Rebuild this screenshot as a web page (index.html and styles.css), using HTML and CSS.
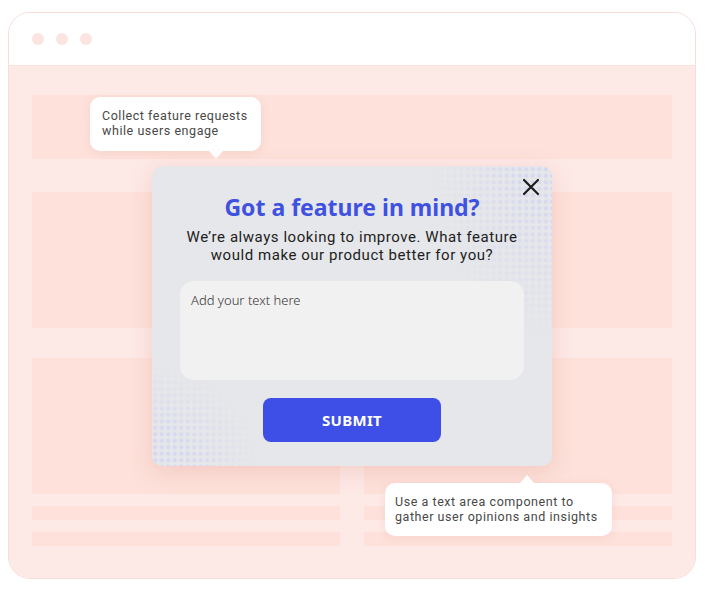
FILE: index.html
```html
<!DOCTYPE html>
<html>
<head>
	<title>feature request</title>
	<link rel="stylesheet" href="styles.css">
</head>
<body>
<div class="browser">
	<div class="browser_bar">
		<span class="dot"></span>
		<span class="dot"></span>
		<span class="dot"></span>
	</div>
	<div class="browser_body">
		<div class="block block_top"></div>
		<div class="block block_mid"></div>
		<div class="cols">
			<div class="col">
				<div class="block block_big"></div>
				<div class="block line"></div>
				<div class="block line"></div>
			</div>
			<div class="col">
				<div class="block block_big"></div>
				<div class="block line"></div>
				<div class="block line"></div>
			</div>
		</div>

		<div class="tip tip_top">
			<p>Collect feature requests<br>while users engage</p>
		</div>

		<div class="modal">
			<div class="dots dots_tr"></div>
			<div class="dots dots_bl"></div>
			<button class="close" aria-label="close">
				<svg width="18" height="18" viewBox="0 0 18 18">
					<path d="M2 2 L16 16 M16 2 L2 16" stroke="#1c1c1c" stroke-width="2.2" stroke-linecap="round"/>
				</svg>
			</button>
			<h1 class="modal_title">Got a feature in mind?</h1>
			<p class="modal_text">We’re always looking to improve. What feature<br>would make our product better for you?</p>
			<textarea class="modal_input" placeholder="Add your text here"></textarea>
			<button class="submit">SUBMIT</button>
		</div>

		<div class="tip tip_bottom">
			<p>Use a text area component to<br>gather user opinions and insights</p>
		</div>
	</div>
</div>
</body>
</html>
```

FILE: styles.css
```css
body{
	margin: 0;
	background: #fff;
	font-family: "Noto Sans", sans-serif;
}
.browser{
	margin: 12px 0 0 8px;
	width: 688px;
	height: 567px;
	box-sizing: border-box;
	border: 1px solid #f8dcd6;
	border-radius: 22px;
	overflow: hidden;
	display: flex;
	flex-direction: column;
}
.browser_bar{
	height: 53px;
	flex: none;
	background: #fff;
	display: flex;
	align-items: center;
	gap: 12px;
	padding: 0 0 1px 23px;
	border-bottom: 1px solid #fbe4df;
	box-sizing: border-box;
}
.dot{
	width: 12px;
	height: 12px;
	border-radius: 50%;
	background: #fce5e1;
}
.browser_body{
	position: relative;
	flex: 1;
	background: #fde9e6;
	padding: 29px 23px 0;
}
.block{
	background: #fde1da;
}
.block_top{
	height: 64px;
}
.block_mid{
	height: 136px;
	margin-top: 33px;
}
.cols{
	display: grid;
	grid-template-columns: 308px 308px;
	gap: 24px;
	margin-top: 30px;
}
.block_big{
	height: 136px;
}
.line{
	height: 14px;
	margin-top: 12px;
}

/* callouts */
.tip{
	position: absolute;
	background: #fff;
	border-radius: 10px;
	box-shadow: 0 2px 8px rgba(220, 150, 140, 0.18);
	box-sizing: border-box;
	font-family: Roboto, sans-serif;
	font-size: 12.5px;
	letter-spacing: 0.55px;
	line-height: 14.5px;
	color: #484848;
}
.tip p{
	margin: 0;
}
.tip::after{
	content: "";
	position: absolute;
	border-left: 7px solid transparent;
	border-right: 7px solid transparent;
}
.tip_top{
	left: 81px;
	top: 31px;
	width: 171px;
	height: 54px;
	padding: 12px 12px;
}
.tip_top::after{
	left: 119px;
	top: 54px;
	border-top: 8px solid #fff;
}
.tip_bottom{
	left: 376px;
	top: 417px;
	width: 227px;
	height: 53px;
	padding: 12px 10px;
}
.tip_bottom::after{
	left: 135px;
	top: -8px;
	border-bottom: 8px solid #fff;
}

/* popup */
.modal{
	position: absolute;
	left: 143px;
	top: 100px;
	width: 400px;
	height: 300px;
	box-sizing: border-box;
	padding: 26px 28px 0;
	background: #e6e7ea;
	border-radius: 10px;
	box-shadow: 0 6px 22px rgba(215, 140, 128, 0.28);
	overflow: hidden;
	display: flex;
	flex-direction: column;
	align-items: center;
}
.dots{
	position: absolute;
	background-image: radial-gradient(circle, #d5d8ef 1.8px, transparent 2.3px);
	background-size: 6.5px 6.5px;
}
.dots_tr{
	right: 0;
	top: 0;
	width: 120px;
	height: 170px;
	-webkit-mask-image: radial-gradient(ellipse 120px 170px at 100% 0, #000 25%, transparent 100%);
	mask-image: radial-gradient(ellipse 120px 170px at 100% 0, #000 25%, transparent 100%);
}
.dots_bl{
	left: 0;
	bottom: 0;
	width: 105px;
	height: 100px;
	-webkit-mask-image: radial-gradient(ellipse 105px 100px at 0 100%, #000 35%, transparent 100%);
	mask-image: radial-gradient(ellipse 105px 100px at 0 100%, #000 35%, transparent 100%);
}
.close{
	position: absolute;
	right: 12px;
	top: 12px;
	width: 18px;
	height: 18px;
	padding: 0;
	border: none;
	background: none;
	cursor: pointer;
}
.modal_title{
	position: relative;
	margin: 0;
	font-size: 23px;
	line-height: 30px;
	font-weight: 700;
	color: #3f51e0;
}
.modal_text{
	position: relative;
	margin: 6px 0 0;
	font-family: Roboto, sans-serif;
	font-size: 15px;
	letter-spacing: 0.55px;
	line-height: 18px;
	color: #1d1d1d;
	text-align: center;
}
.modal_input{
	position: relative;
	width: 344px;
	height: 99px;
	margin-top: 17px;
	box-sizing: border-box;
	padding: 10px 11px;
	border: none;
	border-radius: 14px;
	background: #f1f1f1;
	resize: none;
	outline: none;
	font-family: "Noto Sans", sans-serif;
	font-size: 13px;
	font-weight: 300;
}
.modal_input::placeholder{
	color: #333;
	opacity: 1;
}
.submit{
	position: relative;
	width: 178px;
	height: 44px;
	margin-top: 18px;
	border: none;
	border-radius: 8px;
	background: #3d4fe6;
	color: #fff;
	font-family: "Noto Sans", sans-serif;
	font-size: 15px;
	font-weight: 700;
	letter-spacing: 0.3px;
	cursor: pointer;
}
```
